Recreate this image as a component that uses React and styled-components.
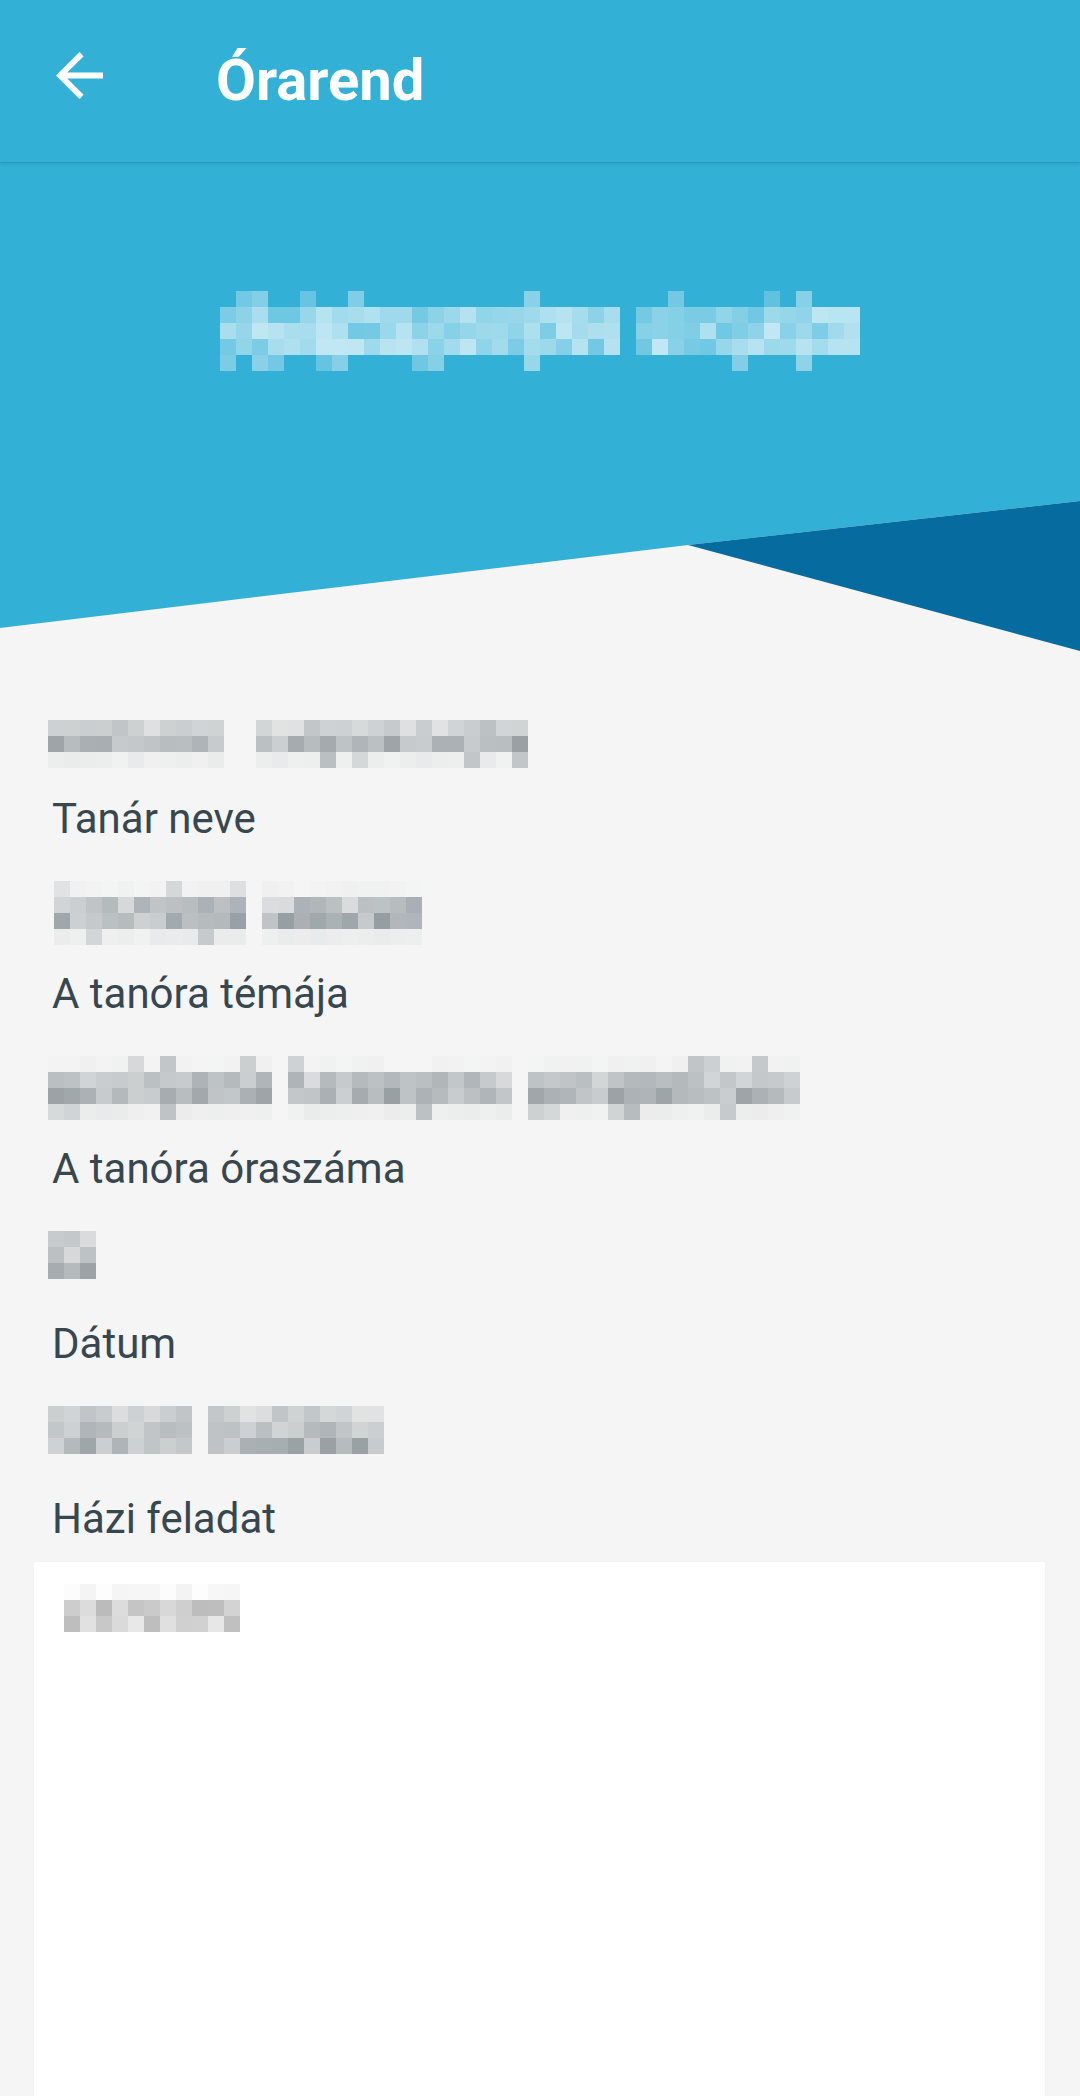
import React from 'react'
import styled, { createGlobalStyle } from 'styled-components'

const BLUE = '#32b0d6'
const DARK = '#066ca0'
const BG = '#f5f5f5'

const GlobalStyle = createGlobalStyle`
  html, body {
    margin: 0;
    padding: 0;
    background: ${BG};
  }
  body {
    font-family: Roboto, "Noto Sans", sans-serif;
    -webkit-font-smoothing: antialiased;
  }
  * { box-sizing: border-box; }
`

const Page = styled.div`
  display: flex;
  flex-direction: column;
  width: 1080px;
  min-height: 100vh;
  background: ${BG};
`

const AppBar = styled.header`
  position: relative;
  z-index: 2;
  display: flex;
  align-items: flex-start;
  height: 162px;
  padding: 52px 0 0 56px;
  background: ${BLUE};
  box-shadow: 0 1px 0 rgba(0, 0, 0, 0.05), 0 2px 4px rgba(0, 0, 0, 0.1);
`

const Back = styled.svg`
  flex: none;
  display: block;
  width: 47px;
  height: 47px;
  fill: #fff;
`

const Title = styled.h1`
  margin: 0 0 0 113px;
  font-size: 58px;
  line-height: 56px;
  font-weight: 700;
  color: #fff;
`

const Hero = styled.section`
  display: flex;
  justify-content: center;
  padding: 129px 0 130px;
  background: ${BLUE};
`

const Slant = styled.svg`
  display: block;
  width: 1080px;
  height: 150px;
  background: ${BG};
`

const Content = styled.main`
  flex: 1;
  display: flex;
  flex-direction: column;
  padding: 69px 35px 0 34px;
`

const Lead = styled.div`
  margin-bottom: 23px;
`

const Label = styled.div`
  padding-left: 18px;
  font-size: 42px;
  line-height: 56px;
  color: #37474f;
`

const ValueSlot = styled.div`
  height: 119px;
  padding-top: 34px;
`

const Card = styled.div`
  flex: 1;
  margin-top: 15px;
  padding: 22px 0 0 30px;
  background: #fff;
  box-shadow: 0 0 1px rgba(0, 0, 0, 0.06);
`

// pixelated redaction blocks
const Mosaic = styled.div`
  display: flex;
  gap: ${p => p.$gap * 16}px;
  margin-left: ${p => p.$x}px;
`

const Word = styled.div`
  display: grid;
  grid-template-columns: repeat(${p => p.$cols}, 16px);
  grid-auto-rows: 16px;
`

const Cell = styled.span`
  display: block;
`

const rand = seed => () => {
  seed = (seed + 0x6d2b79f5) | 0
  let t = Math.imul(seed ^ (seed >>> 15), 1 | seed)
  t = (t + Math.imul(t ^ (t >>> 7), 61 | t)) ^ t
  return ((t ^ (t >>> 14)) >>> 0) / 4294967296
}

const ROWS = {
  asc: r => (r() < 0.2 ? 0.1 + r() * 0.18 : r() * 0.03),
  top: r => 0.1 + r() * 0.2,
  mid: r => 0.14 + r() * 0.26,
  low: r => 0.2 + r() * 0.3,
  desc: r => (r() < 0.14 ? 0.15 + r() * 0.18 : 0.02 + r() * 0.04),
  faint: r => r() * 0.05,
  soft: r => 0.08 + r() * 0.2,
  hasc: r => (r() < 0.18 ? 0.2 + r() * 0.25 : 0),
  hmid: r => 0.3 + r() * 0.4,
  hdesc: r => (r() < 0.18 ? 0.25 + r() * 0.25 : 0)
}

const Blurred = ({ words, rows, ink, seed, x = 0, gap = 1 }) => {
  const r = rand(seed)
  return (
    <Mosaic $x={x} $gap={gap}>
      {words.map((cols, w) => (
        <Word key={w} $cols={cols}>
          {rows.flatMap((kind, ri) =>
            Array.from({ length: cols }, (_, ci) => (
              <Cell
                key={ri + '-' + ci}
                style={{ background: `rgba(${ink},${ROWS[kind](r).toFixed(3)})` }}
              />
            ))
          )}
        </Word>
      ))}
    </Mosaic>
  )
}

const SLATE = '55,71,79'

const fields = [
  { label: 'Tanár neve', words: [12, 10], rows: ['asc', 'mid', 'low', 'desc'], x: 20, seed: 7 },
  { label: 'A tanóra témája', words: [14, 14, 17], rows: ['asc', 'mid', 'low', 'desc'], x: 14, seed: 21 },
  { label: 'A tanóra óraszáma', words: [3], rows: ['top', 'mid', 'low'], x: 14, seed: 5 },
  { label: 'Dátum', words: [9, 11], rows: ['top', 'mid', 'low'], x: 14, seed: 42 }
]

export default function App() {
  return (
    <Page>
      <GlobalStyle />
      <AppBar>
        <Back viewBox='4 4 16 16'>
          <path d='M20 11H7.83l5.59-5.59L12 4l-8 8 8 8 1.41-1.41L7.83 13H20v-2z' />
        </Back>
        <Title>Órarend</Title>
      </AppBar>

      <Hero>
        <Blurred
          words={[25, 14]}
          rows={['hasc', 'hmid', 'hmid', 'hmid', 'hdesc']}
          ink='255,255,255'
          seed={3}
        />
      </Hero>

      <Slant viewBox='0 0 1080 150'>
        <polygon points='0,0 1080,0 688,44 0,127' fill={BLUE} />
        <polygon points='688,44 1080,0 1080,150' fill={DARK} />
      </Slant>

      <Content>
        <Lead>
          <Blurred words={[11, 17]} gap={2} rows={['top', 'low', 'desc']} ink={SLATE} x={14} seed={11} />
        </Lead>

        {fields.map(f => (
          <React.Fragment key={f.label}>
            <Label>{f.label}</Label>
            <ValueSlot>
              <Blurred words={f.words} rows={f.rows} ink={SLATE} x={f.x} seed={f.seed} />
            </ValueSlot>
          </React.Fragment>
        ))}

        <Label>Házi feladat</Label>
        <Card>
          <Blurred words={[11]} rows={['faint', 'soft', 'soft']} ink='0,0,0' seed={9} />
        </Card>
      </Content>
    </Page>
  )
}
